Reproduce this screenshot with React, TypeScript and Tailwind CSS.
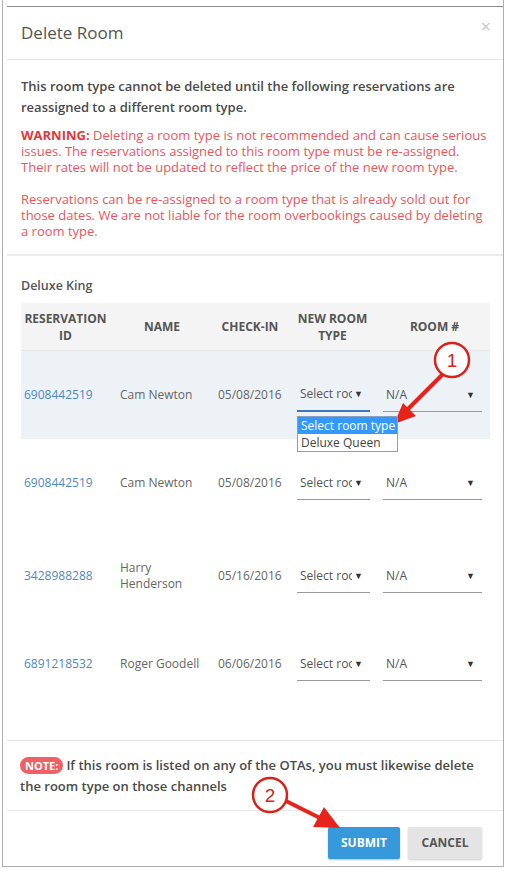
import React from "react";

type Row = {
  id: string;
  name: string[];
  date: string;
  h: string;
  active?: boolean;
};

const rows: Row[] = [
  { id: "6908442519", name: ["Cam Newton"], date: "05/08/2016", h: "h-[88px]", active: true },
  { id: "6908442519", name: ["Cam Newton"], date: "05/08/2016", h: "h-[88px]" },
  { id: "3428988288", name: ["Harry", "Henderson"], date: "05/16/2016", h: "h-[98px]" },
  { id: "6891218532", name: ["Roger Goodell"], date: "06/06/2016", h: "h-[78px]" },
];

const cols = "grid grid-cols-[89px_104px_72px_93px_111px]";

function RoomTypeSelect({ focused }: { focused?: boolean }) {
  return (
    <div
      className={
        "w-[73px] h-[34px] flex items-center justify-between pl-[3px] pr-[7px] text-[12px] text-[#555] " +
        (focused ? "border-b-2 border-[#3c78c0]" : "border-b border-[#9a9a9a]")
      }
    >
      <span className="w-[52px] overflow-hidden whitespace-nowrap">Select room type</span>
      <span className="text-[9px] text-[#333]">▼</span>
    </div>
  );
}

function RoomNumberSelect() {
  return (
    <div className="w-[99px] h-[34px] flex items-center justify-between pl-[3px] pr-[7px] text-[12px] text-[#555] border-b border-[#9a9a9a]">
      <span>N/A</span>
      <span className="text-[9px] text-[#333]">▼</span>
    </div>
  );
}

function Callout({ cx, cy, label }: { cx: number; cy: number; label: string }) {
  return (
    <g>
      <circle cx={cx} cy={cy} r={17} fill="#ffffff" stroke="#d8221c" strokeWidth={2.5} />
      <text
        x={cx}
        y={cy + 6.5}
        textAnchor="middle"
        fontFamily="Liberation Sans, Arial, sans-serif"
        fontSize={19}
        fill="#d8221c"
      >
        {label}
      </text>
    </g>
  );
}

export default function App() {
  return (
    <div className="relative w-[510px] h-[871px] bg-white overflow-hidden font-['Open_Sans',sans-serif]">
      {/* window frame */}
      <div className="ml-[2px] w-[502px] h-[867px] border-x border-b border-[#b0b0b0] flex flex-col">
        <div className="ml-[4px] mt-[6px] flex-1 border-t border-[#8c8c8c] flex flex-col">
          {/* header */}
          <div className="h-[53px] shrink-0 flex items-center justify-between pl-[14px] pr-[12px] border-b border-[#e6e6e6]">
            <h1 className="text-[17px] text-[#555] font-normal">Delete Room</h1>
            <span className="text-[#c8c8c8] text-[18px] leading-none -mt-[14px]">×</span>
          </div>

          {/* explanation */}
          <div className="pl-[14px] pr-[14px] pt-[16px] pb-[15px] border-b-2 border-[#ececec]">
            <p className="text-[13px] leading-[21px] font-semibold text-[#4a4a4a]">
              This room type cannot be deleted until the following reservations are reassigned to a
              different room type.
            </p>
            <p className="mt-[9px] text-[13px] leading-[16px] text-[#f0545a]">
              <span className="font-bold text-[#e8333a]">WARNING:</span> Deleting a room type is not
              recommended and can cause serious issues. The reservations assigned to this room type
              must be re-assigned. Their rates will not be updated to reflect the price of the new room
              type.
            </p>
            <p className="mt-[16px] text-[13px] leading-[16px] text-[#f0545a]">
              Reservations can be re-assigned to a room type that is already sold out for those dates.
              We are not liable for the room overbookings caused by deleting a room type.
            </p>
          </div>

          {/* reservations table */}
          <div className="pl-[14px] pr-[13px] pt-[21px] h-[485px] shrink-0 border-b border-[#e6e6e6]">
            <div className="text-[12.5px] leading-[18px] font-semibold text-[#555]">Deluxe King</div>
            <div className="mt-[8px] w-[469px]">
              <div className={cols + " h-[48px] bg-[#f4f4f4] border-b border-[#e6e6e6] text-[12px] leading-[17px] font-bold text-[#555] text-center items-center"}>
                <div>
                  RESERVATION
                  <br />
                  ID
                </div>
                <div>NAME</div>
                <div>CHECK-IN</div>
                <div>
                  NEW ROOM
                  <br />
                  TYPE
                </div>
                <div>ROOM #</div>
              </div>
              {rows.map((r, i) => (
                <div
                  key={i}
                  className={cols + " items-center text-[12px] text-[#666] " + r.h + (r.active ? " bg-[#edf2f7]" : "")}
                >
                  <div className="pl-[3px] text-[#4f88c6]">{r.id}</div>
                  <div className="pl-[10px] leading-[16px]">
                    {r.name.map((n) => (
                      <div key={n}>{n}</div>
                    ))}
                  </div>
                  <div className="pl-[4px]">{r.date}</div>
                  <div className="pl-[11px] relative">
                    <RoomTypeSelect focused={r.active} />
                    {r.active && (
                      <div className="absolute left-[11px] top-[38px] w-[101px] bg-white border border-[#8aa0c0] text-[12px] leading-[17px] z-10">
                        <div className="bg-[#3399ff] text-white pl-[3px] whitespace-nowrap">Select room type</div>
                        <div className="text-[#444] pl-[3px]">Deluxe Queen</div>
                      </div>
                    )}
                  </div>
                  <div className="pl-[4px]">
                    <RoomNumberSelect />
                  </div>
                </div>
              ))}
            </div>
          </div>

          {/* note */}
          <div className="pl-[13px] pr-[16px] pt-[14px] pb-[13px] border-b border-[#e6e6e6]">
            <p className="text-[13px] leading-[21px] font-semibold text-[#4a4a4a]">
              <span className="inline-block bg-[#ef5f66] text-white text-[11px] leading-[17px] font-bold rounded-full px-[5px] mr-[3px]">
                NOTE:
              </span>
              If this room is listed on any of the OTAs, you must likewise delete the room type on those
              channels
            </p>
          </div>

          {/* actions */}
          <div className="flex justify-end gap-[8px] pt-[16px] pr-[21px]">
            <button className="w-[72px] h-[32px] rounded-[2px] bg-[#3599dc] text-white text-[12px] font-bold shadow-[0_1px_2px_rgba(0,0,0,0.25)]">
              SUBMIT
            </button>
            <button className="w-[74px] h-[32px] rounded-[2px] bg-[#e4e4e4] text-[#555] text-[12px] font-bold shadow-[0_1px_2px_rgba(0,0,0,0.2)]">
              CANCEL
            </button>
          </div>
        </div>
      </div>

      {/* step callouts */}
      <svg className="absolute inset-0 pointer-events-none" width={510} height={871}>
        <line x1={442} y1={375} x2={405} y2={412} stroke="#e8231c" strokeWidth={4} strokeLinecap="round" />
        <polygon points="394,424 416,416 403,403" fill="#e8231c" />
        <Callout cx={452} cy={360} label="1" />

        <line x1={286} y1={801} x2={322} y2={819} stroke="#e8231c" strokeWidth={4} strokeLinecap="round" />
        <polygon points="340,828 313,827 324,807" fill="#e8231c" />
        <Callout cx={270} cy={795} label="2" />
      </svg>
    </div>
  );
}
